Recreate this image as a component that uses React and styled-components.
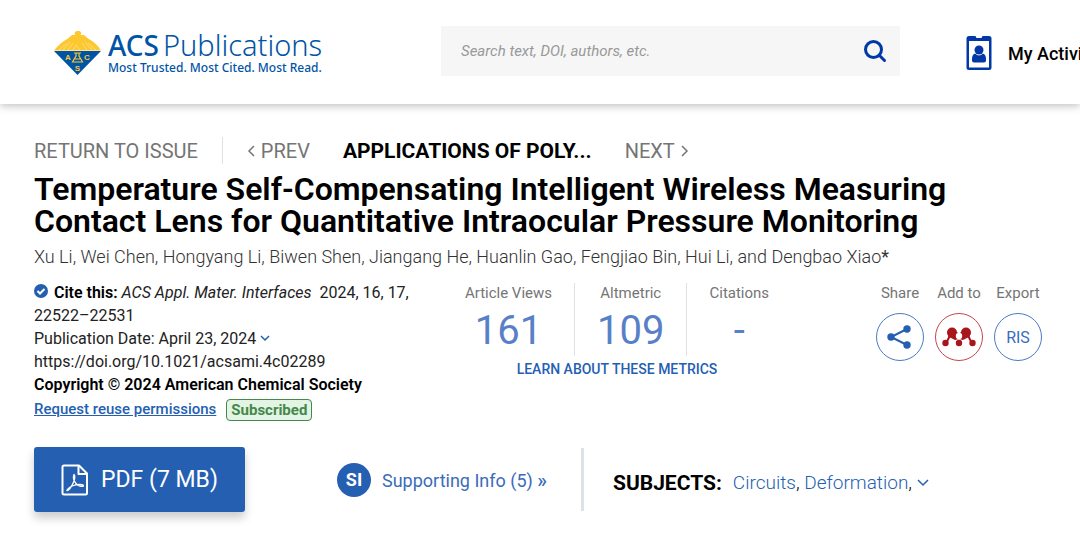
import React from "react";
import styled, { createGlobalStyle } from "styled-components";

const subjects = ["Circuits", "Deformation"];

const metrics = [
  { label: "Article Views", value: "161" },
  { label: "Altmetric", value: "109" },
  { label: "Citations", value: "-" },
];

const LogoMark = () => (
  <svg width="48" height="46" viewBox="0 0 48 46" aria-hidden="true">
    <path
      d="M0 20.500 C4 15 9 11 14 8.500 L18 5 L21 5 C20 3 21 1 24 1 C27 1 28 3 26.500 5 L30 5 L34 8.500 C39 11 44 15 47 20.500 Z"
      fill="#fdc82f"
    />
    <path
      d="M5 20 L13 13 M9 20 L16 12 M14 20 L19 13 M33 20 L28 13 M38 20 L31 12 M42 20 L34 13 M19 20 L22 15 L26 20"
      stroke="#fff"
      strokeWidth="0.6"
      fill="none"
      opacity="0.6"
    />
    <path d="M0 21 H47 L23.500 45 Z" fill="#0054a6" />
    <g
      fill="#fdc82f"
      fontFamily="Liberation Sans, sans-serif"
      fontWeight="700"
      fontSize="8"
      textAnchor="middle"
    >
      <text x="14" y="30">A</text>
      <text x="33" y="30">C</text>
      <text x="23.500" y="41">S</text>
    </g>
    <path
      d="M20 23 H27 M22 23 V26 L18.500 32 H28.500 L25 26 V23 M21 29 H26"
      fill="none"
      stroke="#fdc82f"
      strokeWidth="1.200"
    />
  </svg>
);

const SearchIcon = () => (
  <svg width="24" height="24" viewBox="0 0 24 24" aria-hidden="true">
    <g fill="none" stroke="#0039a6" strokeWidth="3">
      <circle cx="10.500" cy="10.500" r="8" />
      <path d="M16.500 16.500 L21.500 21.500" strokeLinecap="round" />
    </g>
  </svg>
);

const BadgeIcon = () => (
  <svg width="26" height="36" viewBox="0 0 26 36" aria-hidden="true">
    <path
      fill="#0039a6"
      fillRule="evenodd"
      d="M3 1 H9 Q10 1 10 2 Q10 3 11 3 H15 Q16 3 16 2 Q16 1 17 1 H23 Q25.500 1 25.500 3.500 V32.500 Q25.500 35 23 35 H3 Q0.500 35 0.500 32.500 V3.500 Q0.500 1 3 1 Z M3 6 V32 Q3 32.500 3.500 32.500 H22.500 Q23 32.500 23 32 V6 Z"
    />
    <circle cx="13" cy="15" r="4.500" fill="#0039a6" />
    <path
      fill="#0039a6"
      d="M9 18.500 Q13 22.500 17 18.500 Q20 19.500 20 24 V25.500 Q20 27.500 18 27.500 H8 Q6 27.500 6 25.500 V24 Q6 19.500 9 18.500 Z"
    />
  </svg>
);

const CheckIcon = () => (
  <svg width="14" height="14" viewBox="0 0 14 14" aria-hidden="true">
    <circle cx="7" cy="7" r="7" fill="#255fb2" />
    <path d="M3.500 7 L6 9.500 L10.500 5" fill="none" stroke="#fff" strokeWidth="2" />
  </svg>
);

const Chevron = ({ d, color, width = 10, height = 10 }) => (
  <svg width={width} height={height} viewBox={`0 0 ${width} ${height}`} aria-hidden="true">
    <path d={d} fill="none" stroke={color} strokeWidth="1.500" />
  </svg>
);

const ShareIcon = () => (
  <svg width="26" height="26" viewBox="0 0 26 26" aria-hidden="true">
    <path d="M20 5 L4 13 L20 21" fill="none" stroke="#255fb2" strokeWidth="2" />
    <g fill="#255fb2">
      <circle cx="4" cy="13" r="3.700" />
      <circle cx="20" cy="5" r="3.700" />
      <circle cx="20" cy="21" r="3.700" />
    </g>
  </svg>
);

const MendeleyIcon = () => (
  <svg width="34" height="20" viewBox="0 0 34 20" aria-hidden="true">
    <g fill="none" stroke="#a9151c" strokeWidth="2">
      <path d="M8 7 Q7 12 4 16 M26 7 Q27 12 30 16" />
    </g>
    <g fill="#a9151c">
      <path d="M6 5 L15 5 L17 7 L19 5 L28 5 L27 10 L21 13 L17 12 L13 13 L7 10 Z" />
      <circle cx="10" cy="5.500" r="5" />
      <circle cx="24" cy="5.500" r="5" />
      <circle cx="3.500" cy="16" r="3.200" />
      <circle cx="17" cy="16" r="3.200" />
      <circle cx="30.500" cy="16" r="3.200" />
    </g>
    <circle cx="17" cy="9" r="3.200" fill="#fff" />
  </svg>
);

const PdfIcon = () => (
  <svg width="28" height="32" viewBox="0 0 28 32" aria-hidden="true">
    <g fill="none" stroke="#fff" strokeLinejoin="round">
      <path d="M3 1.500 H18 L26 9.500 V29 Q26 30.500 24.500 30.500 H3 Q1.500 30.500 1.500 29 V3 Q1.500 1.500 3 1.500 Z" strokeWidth="2" />
      <path d="M17.500 2 V10 H26" strokeWidth="2" />
      <path
        d="M13 10.500 C12 13 13 17 15 19.500 C17 22 21 23 22.500 22 C22.500 20 16 20 11 22 C8 23.500 5.500 26 6 26.500 C8 27 12 20 13 17 C14 14 14 11.500 13 10.500 Z"
        strokeWidth="1.300"
      />
    </g>
  </svg>
);

const App = () => {
  return (
    <>
      <GlobalStyle />
      <Header>
        <Logo href="#">
          <LogoMark />
          <LogoText>
            <LogoName>
              <b>ACS</b>
              <span>Publications</span>
            </LogoName>
            <LogoTagline>Most Trusted. Most Cited. Most Read.</LogoTagline>
          </LogoText>
        </Logo>
        <SearchForm role="search">
          <SearchInput
            type="text"
            aria-label="Search"
            placeholder="Search text, DOI, authors, etc."
          />
          <SearchButton type="button" aria-label="Search">
            <SearchIcon />
          </SearchButton>
        </SearchForm>
        <ActivityLink href="#">
          <BadgeIcon />
          My Activity
        </ActivityLink>
      </Header>

      <Article>
        <IssueNav>
          <ReturnLink href="#">RETURN TO ISSUE</ReturnLink>
          <NavLink href="#">
            <Chevron d="M7 1 L2 6 L7 11" color="#757575" width={8} height={12} />
            PREV
          </NavLink>
          <Section>APPLICATIONS OF POLY...</Section>
          <NavLink href="#">
            NEXT
            <Chevron d="M1 1 L6 6 L1 11" color="#757575" width={8} height={12} />
          </NavLink>
        </IssueNav>
        <Title>
          Temperature Self-Compensating Intelligent Wireless Measuring Contact
          Lens for Quantitative Intraocular Pressure Monitoring
        </Title>
        <Authors>
          Xu Li, Wei Chen, Hongyang Li, Biwen Shen, Jiangang He, Huanlin Gao,
          Fengjiao Bin, Hui Li, and Dengbao Xiao<b>*</b>
        </Authors>

        <Details>
          <Citation>
            <p>
              <CheckIcon /> <strong>Cite this:</strong>{" "}
              <em>ACS Appl. Mater. Interfaces</em>&nbsp; 2024, 16, 17,
              22522–22531
            </p>
            <p>
              Publication Date: April 23, 2024{" "}
              <Chevron d="M1 2 L5 6 L9 2" color="#255fb2" />
            </p>
            <p>
              <a href="#">https://doi.org/10.1021/acsami.4c02289</a>
            </p>
            <p>
              <strong>Copyright © 2024 American Chemical Society</strong>
            </p>
            <Rights>
              <ReuseLink href="#">Request reuse permissions</ReuseLink>
              <Badge>Subscribed</Badge>
            </Rights>
          </Citation>

          <Metrics>
            <MetricList>
              {metrics.map((metric) => (
                <Metric key={metric.label}>
                  <dt>{metric.label}</dt>
                  <dd>{metric.value}</dd>
                </Metric>
              ))}
            </MetricList>
            <MetricsLink href="#">LEARN ABOUT THESE METRICS</MetricsLink>
          </Metrics>

          <Actions>
            <Action>
              <span id="share">Share</span>
              <RoundButton type="button" aria-labelledby="share">
                <ShareIcon />
              </RoundButton>
            </Action>
            <Action>
              <span id="add-to">Add to</span>
              <RoundButton type="button" aria-labelledby="add-to" $color="#c4474c">
                <MendeleyIcon />
              </RoundButton>
            </Action>
            <Action>
              <span>Export</span>
              <RoundButton type="button">RIS</RoundButton>
            </Action>
          </Actions>
        </Details>

        <Resources>
          <PdfButton type="button">
            <PdfIcon />
            PDF (7 MB)
          </PdfButton>
          <SupportingLink href="#">
            <SupportingBadge>SI</SupportingBadge>
            <span>
              Supporting Info (5) <b>»</b>
            </span>
          </SupportingLink>
          <Subjects>
            <h2>SUBJECTS:</h2>
            <p>
              {subjects.map((subject) => (
                <React.Fragment key={subject}>
                  <a href="#">{subject}</a>,{" "}
                </React.Fragment>
              ))}
              <Chevron d="M1 1 L6 6 L11 1" color="#255fb2" width={12} height={10} />
            </p>
          </Subjects>
        </Resources>
      </Article>
    </>
  );
};

const GlobalStyle = createGlobalStyle`
  * {
    box-sizing: border-box;
    margin: 0;
    padding: 0;
  }
  body {
    background: #fff;
    color: #000;
    font-family: Roboto, "Liberation Sans", sans-serif;
    font-size: 16px;
    overflow-x: hidden;
  }
  a {
    color: inherit;
    text-decoration: none;
  }
  button {
    border: none;
    background: none;
    font-family: inherit;
    cursor: pointer;
  }
`;

const Header = styled.header`
  display: flex;
  align-items: center;
  height: 104px;
  padding: 0 0 2px 54px;
  white-space: nowrap;
  box-shadow: 0 2px 8px rgba(0, 0, 0, 0.25);
`;

const Logo = styled.a`
  display: flex;
  align-items: center;
  gap: 6px;
  width: 387px;
  padding-top: 3px;
  flex-shrink: 0;
  color: #0054a6;
  font-family: "Noto Sans", "Open Sans", sans-serif;
`;

const LogoText = styled.span`
  display: flex;
  flex-direction: column;
`;

const LogoName = styled.span`
  display: flex;
  align-items: baseline;
  gap: 4px;
  font-size: 29px;
  line-height: 30px;
  font-weight: 300;
  b {
    font-size: 28px;
    font-weight: 500;
  }
`;

const LogoTagline = styled.span`
  font-size: 12px;
  line-height: 16px;
  font-weight: 500;
`;

const SearchForm = styled.form`
  display: flex;
  align-items: center;
  flex: 1 0 459px;
  max-width: 459px;
  height: 50px;
  background: #f6f6f6;
`;

const SearchInput = styled.input`
  flex: 1;
  min-width: 0;
  height: 100%;
  padding: 0 20px;
  border: none;
  background: transparent;
  font-family: inherit;
  font-size: 15px;
  &::placeholder {
    color: #999;
    font-style: italic;
  }
`;

const SearchButton = styled.button`
  display: flex;
  padding: 0 13px;
`;

const ActivityLink = styled.a`
  display: flex;
  align-items: center;
  gap: 16px;
  margin-left: 66px;
  padding-top: 4px;
  flex-shrink: 0;
  font-size: 18px;
  font-weight: 500;
`;

const Article = styled.main`
  padding: 33px 34px 24px;
`;

const IssueNav = styled.nav`
  display: flex;
  align-items: center;
  height: 27px;
  color: #757575;
  font-size: 20px;
`;

const ReturnLink = styled.a`
  display: flex;
  align-items: center;
  height: 100%;
  padding-right: 24px;
  margin-right: 24px;
  border-right: 1px solid #dbe3e8;
`;

const NavLink = styled.a`
  display: flex;
  align-items: center;
  gap: 6px;
`;

const Section = styled.strong`
  margin: 0 33px;
  color: #000;
  font-size: 21px;
  font-weight: 700;
`;

const Title = styled.h1`
  max-width: 940px;
  margin-top: 9px;
  font-size: 32px;
  line-height: 32px;
  font-weight: 600;
`;

const Authors = styled.p`
  margin-top: 8px;
  color: #333;
  font-size: 18px;
  line-height: 24px;
  font-weight: 300;
  b {
    font-weight: 400;
  }
`;

const Details = styled.div`
  display: flex;
  align-items: flex-start;
  margin-top: 12px;
`;

const Citation = styled.div`
  width: 400px;
  color: #222;
  line-height: 23px;
  strong {
    color: #000;
    font-weight: 600;
  }
  p svg:first-child:not(:last-child) {
    margin-right: 2px;
  }
`;

const Rights = styled.div`
  display: flex;
  align-items: center;
  gap: 10px;
  margin-top: 2px;
  font-size: 15px;
`;

const ReuseLink = styled.a`
  color: #255fb2;
  font-weight: 500;
  text-decoration: underline;
`;

const Badge = styled.span`
  padding: 0 4px;
  border: 1px solid #43894a;
  border-radius: 4px;
  background: #e3f3e4;
  color: #43894a;
  line-height: 20px;
  font-weight: 700;
`;

const Metrics = styled.section`
  width: 366px;
  padding-top: 2px;
  text-align: center;
`;

const MetricList = styled.dl`
  display: flex;
  justify-content: center;
`;

const Metric = styled.div`
  height: 73px;
  padding: 0 22px;
  color: #757575;
  font-size: 15px;
  line-height: 20px;
  & + & {
    border-left: 1px solid #dbe3e8;
  }
  dd {
    margin-top: 6px;
    color: #5880c8;
    font-size: 40px;
    line-height: 44px;
  }
`;

const MetricsLink = styled.a`
  color: #255fb2;
  font-size: 14px;
  line-height: 26px;
  font-weight: 500;
`;

const Actions = styled.div`
  display: flex;
  gap: 11px;
  margin-left: auto;
  padding: 2px 4px 0 0;
`;

const Action = styled.div`
  display: flex;
  flex-direction: column;
  align-items: center;
  gap: 10px;
  width: 48px;
  color: #757575;
  font-size: 15px;
  line-height: 20px;
  white-space: nowrap;
`;

const RoundButton = styled.button`
  display: flex;
  align-items: center;
  justify-content: center;
  width: 48px;
  height: 48px;
  border: 1px solid ${({ $color }) => $color || "#4a7bc4"};
  border-radius: 50%;
  color: #3b6cb9;
  font-size: 16px;
`;

const Resources = styled.div`
  display: flex;
  align-items: center;
  margin-top: 26px;
`;

const PdfButton = styled.button`
  display: flex;
  align-items: center;
  justify-content: center;
  gap: 12px;
  width: 211px;
  height: 65px;
  border-radius: 3px;
  background: #255fb2;
  box-shadow: 0 6px 10px rgba(0, 0, 0, 0.2);
  color: #fff;
  font-size: 23px;
`;

const SupportingLink = styled.a`
  display: flex;
  align-items: center;
  gap: 11px;
  margin-left: 92px;
  color: #3b6cb9;
  font-size: 18px;
  b {
    font-size: 20px;
    font-weight: 500;
  }
`;

const SupportingBadge = styled.span`
  width: 34px;
  border-radius: 50%;
  background: #255fb2;
  color: #fff;
  line-height: 34px;
  font-weight: 700;
  text-align: center;
`;

const Subjects = styled.section`
  display: flex;
  align-items: center;
  gap: 11px;
  height: 63px;
  margin-left: 34px;
  padding: 6px 0 0 29px;
  border-left: 3px solid #dbe3e8;
  h2 {
    font-size: 21px;
    font-weight: 700;
  }
  p {
    font-size: 19px;
    font-weight: 300;
  }
  a {
    color: #255fb2;
  }
`;

export default App;
